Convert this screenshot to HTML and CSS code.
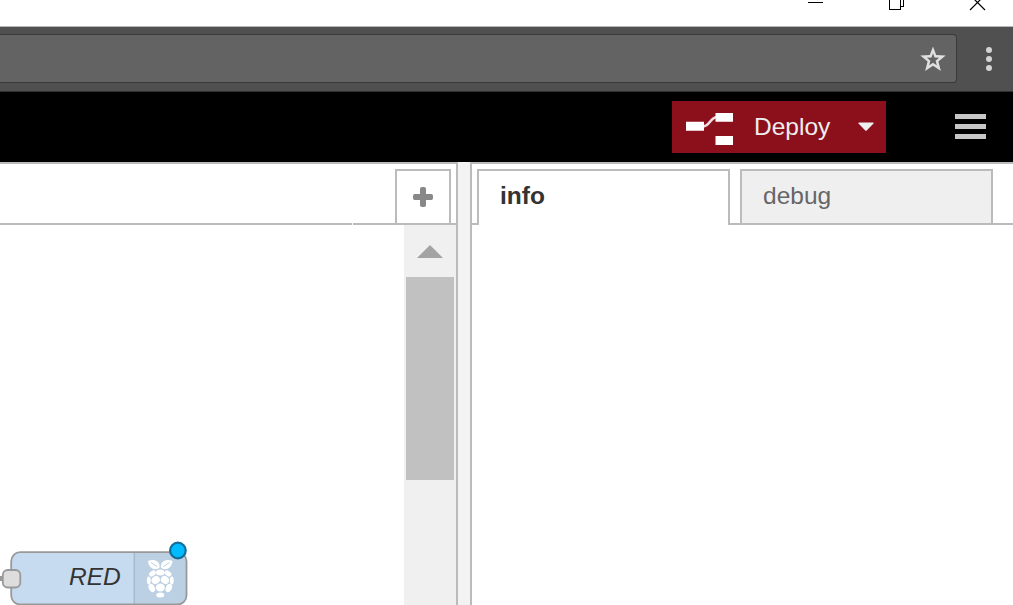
FILE: index.html
```
<!DOCTYPE html>
<html lang="en">
<head>
<meta charset="utf-8">
<title>Node-RED</title>
<link rel="stylesheet" href="styles.css">
</head>
<body>
<div class="titlebar">
  <svg class="window-controls" width="220" height="26" viewBox="0 0 220 26" fill="none" stroke="#000" shape-rendering="crispEdges">
    <path d="M15 2.500h15M96.500 -4v13.500h11V-4M107 6.500h3.500V-4"/>
    <path d="M177.500 -4.500l14.500 14.500M191.500 -4.500l-14.500 14.500" shape-rendering="auto" stroke-width="1.200"/>
  </svg>
</div>
<div class="browserbar">
  <div class="address">
    <svg width="26" height="26" viewBox="0 0 26 26"><path fill="#dfdfdf" fill-rule="evenodd" d="M13 0.500l3.200 8.600 9.500.5-7.300 6L20.900 25 13 19.800 5.100 25l2.500-9.400-7.300-6 9.500-.5zM13 7.300l-1.500 4.200-4.600.3 3.500 2.900-1.200 4.500 3.800-2.500 3.800 2.500-1.200-4.500 3.500-2.900-4.600-.3z"/></svg>
  </div>
  <div class="more"><i></i><i></i><i></i></div>
</div>
<header class="header">
  <button class="deploy">
    <svg width="48" height="34" viewBox="0 0 48 34"><path d="M16 13.500c9 0 7-9.500 16-9.500" fill="none" stroke="#eedde0" stroke-width="2.500"/><path d="M0 8.700h18v9H0zM29.500 0H47v8.700H29.500zM29.500 23H47v9H29.500z" fill="#fff"/></svg>
    <span class="deploy-label">Deploy</span>
    <svg class="caret" width="16" height="10" viewBox="0 0 16 10"><path d="M1 .5h14q1 .3.500 1L8.700 8.600q-.7.600-1.400 0L.5 1.500Q0 .8 1 .5z" fill="#eee"/></svg>
  </button>
  <div class="menu"><i></i><i></i><i></i></div>
</header>
<main class="main">
  <section class="workspace">
    <div class="workspace-tabs">
      <div class="add-tab"><svg width="20" height="20" viewBox="0 0 20 20"><path d="M9 0h2q2 0 2 1.700V7h5.300Q20 7 20 9v2q0 2-1.700 2H13v5.300Q13 20 11 20H9q-2 0-2-1.700V13H1.700Q0 13 0 11V9q0-2 1.700-2H7V1.700Q7 0 9 0z" fill="#888"/></svg></div>
    </div>
    <div class="workspace-body">
      <div class="canvas">
        <svg class="node" width="200" height="80" viewBox="0 525 200 80">
          <path d="M0 578.500h5" stroke="#999" stroke-width="5"/>
          <rect x="11" y="552" width="175.500" height="53" rx="9" fill="#c6dbef"/>
          <path d="M134 552h43.500a9 9 0 0 1 9 9v35a9 9 0 0 1-9 9H134z" fill="#bcd0e3"/>
          <path d="M134.300 553v51" stroke="#a8bac9" stroke-width="1.500"/>
          <rect x="11.200" y="552.200" width="175.300" height="52.300" rx="9" fill="none" stroke="#999" stroke-width="1.800"/>
          <rect x="2.800" y="570" width="17.500" height="17.500" rx="5" fill="#ddd" stroke="#999" stroke-width="1.800"/>
          <text class="node-label" x="69" y="585">RED</text>
          <g fill="#fff">
            <path d="M148 561q5-2 9 .2 3 2 2.600 6.200-3.200 3-7.200 1.200-3.900-2.200-4.400-7.600z"/>
            <path d="M172.500 561q-5-2-9 .2-3 2-2.600 6.200 3.200 3 7.200 1.200 3.900-2.200 4.400-7.600z"/>
            <ellipse cx="160.300" cy="572.500" rx="4.300" ry="3"/>
            <ellipse cx="152.500" cy="573.500" rx="3.700" ry="2.500" transform="rotate(-35 152.500 573.500)"/>
            <ellipse cx="168" cy="573.500" rx="3.700" ry="2.500" transform="rotate(35 168 573.500)"/>
            <ellipse cx="155.700" cy="580" rx="4.300" ry="3.800" transform="rotate(-35 155.700 580)"/>
            <ellipse cx="165" cy="580" rx="4.300" ry="3.800" transform="rotate(35 165 580)"/>
            <ellipse cx="148.800" cy="580.500" rx="1.900" ry="3.900"/>
            <ellipse cx="171.800" cy="580.500" rx="1.900" ry="3.900"/>
            <ellipse cx="151.800" cy="588" rx="3" ry="4.300" transform="rotate(-25 151.800 588)"/>
            <ellipse cx="168.800" cy="588" rx="3" ry="4.300" transform="rotate(25 168.800 588)"/>
            <ellipse cx="160.300" cy="587.500" rx="4.500" ry="4"/>
            <ellipse cx="160.300" cy="595" rx="4" ry="2.500"/>
          </g>
          <g fill="none" stroke="#bcd0e3" stroke-width="1"><path d="M151 562.500l6 4M169.500 562.500l-6 4"/></g>
          <circle cx="177.900" cy="550.500" r="7.800" fill="#00bcff" stroke="#126e99" stroke-width="2.200"/>
        </svg>
      </div>
      <div class="scrollbar">
        <svg class="arrow" width="26" height="14" viewBox="0 0 26 14"><path d="M13 0l13 13H0z" fill="#a3a3a3"/></svg>
        <div class="thumb"></div>
      </div>
    </div>
  </section>
  <div class="separator"></div>
  <aside class="sidebar">
    <div class="sidebar-tabs">
      <div class="tab active">info</div>
      <div class="tab">debug</div>
    </div>
  </aside>
</main>
</body>
</html>
```
FILE: styles.css
```
* { box-sizing: border-box; }
body {
  margin: 0;
  height: 605px;
  overflow: hidden;
  display: flex;
  flex-direction: column;
  background: #fff;
  font: 24.5px/35px "Liberation Sans", Arial, sans-serif;
}
svg { display: block; flex: none; }
.titlebar {
  height: 27px;
  flex: none;
  display: flex;
  justify-content: flex-end;
  border-bottom: 1px solid #b8b8b8;
}
.browserbar {
  height: 65px;
  flex: none;
  display: flex;
  padding-top: 7px;
  background: #505050;
  border-bottom: 1px solid #303030;
}
.address {
  width: 957px;
  height: 49px;
  display: flex;
  justify-content: flex-end;
  padding: 11px 10px 0 0;
  background: #636363;
  border: 1px solid #3a3a3a;
  border-left: 0;
  border-radius: 0 4px 4px 0;
}
.more {
  display: flex;
  flex-direction: column;
  gap: 3px;
  padding: 13px 0 0 29px;
}
.more i {
  width: 6px;
  height: 6px;
  border-radius: 50%;
  background: #d3d3d3;
}
.header {
  height: 70px;
  flex: none;
  display: flex;
  justify-content: flex-end;
  padding: 9px 27px 0 0;
  background: #000;
}
.deploy {
  width: 214px;
  height: 52px;
  display: flex;
  align-items: flex-start;
  padding: 12px 0 0 14px;
  border: 0;
  background: #8c101c;
  color: #eee;
  font: inherit;
}
.deploy-label {
  width: 104px;
  margin: -4px 0 0 20px;
  text-align: left;
}
.caret { margin: 9px 0 0 0; }
.menu {
  width: 31px;
  display: flex;
  flex-direction: column;
  gap: 5px;
  margin-left: 69px;
  padding-top: 13px;
}
.menu i {
  height: 5px;
  background: #c7c7c7;
}
.main {
  flex: 1;
  min-height: 0;
  display: flex;
}
.workspace {
  width: 458px;
  flex: none;
  display: flex;
  flex-direction: column;
  border: solid #bbb;
  border-width: 2px 2px 0 0;
}
.workspace-tabs {
  height: 61px;
  flex: none;
  display: flex;
  justify-content: flex-end;
  padding: 5px 5px 0 0;
  background: linear-gradient(#fff, #fff) 352px 100% / 1px 2px no-repeat, linear-gradient(#bbb, #bbb) 0 100% / 100% 2px no-repeat;
}
.add-tab {
  width: 56px;
  height: 54px;
  display: flex;
  justify-content: center;
  padding-top: 16px;
  border: 2px solid #bbb;
  border-bottom: 0;
}
.workspace-body {
  flex: 1;
  min-height: 0;
  display: flex;
}
.canvas {
  width: 404px;
  display: flex;
  align-items: flex-end;
}
.node-label {
  font-style: italic;
  fill: #333;
}
.scrollbar {
  width: 52px;
  padding: 20px 2px 0;
  background: #f0f0f0;
}
.arrow { margin-left: 11px; }
.thumb {
  height: 203px;
  margin-top: 18px;
  background: #c1c1c1;
}
.separator {
  width: 12px;
  flex: none;
  background: #f3f3f3;
}
.sidebar {
  flex: 1;
  border: solid #bbb;
  border-width: 2px 0 0 2px;
}
.sidebar-tabs {
  height: 61px;
  display: flex;
  gap: 10px;
  padding: 5px 0 0 5px;
  border-bottom: 2px solid #bbb;
}
.tab {
  width: 253px;
  height: 54px;
  padding: 7px 0 0 21px;
  border: 2px solid #bbb;
  border-bottom: 0;
  background: #efefef;
  color: #666;
}
.tab.active {
  height: 56px;
  background: #fff;
  color: #333;
  font-weight: bold;
  border-radius: 0 0 2px 2px;
}
```
